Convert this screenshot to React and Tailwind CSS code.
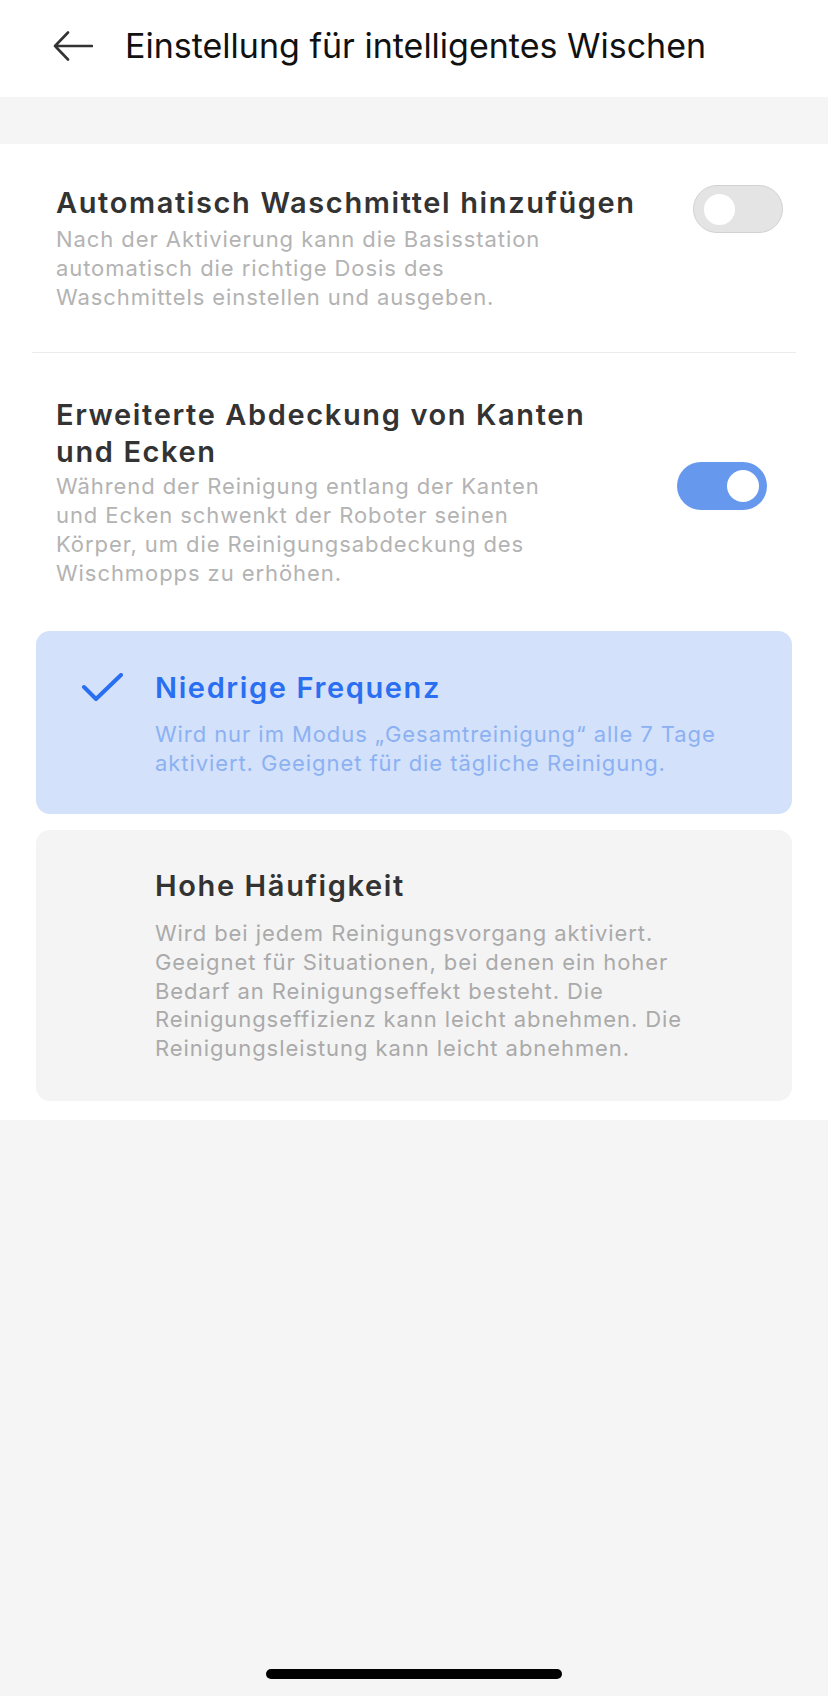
import React from "react";

const FONT = { fontFamily: "Inter, 'Noto Sans', sans-serif" };

function Toggle({ on }) {
  return on ? (
    <div className="w-[90px] h-[48px] rounded-full bg-[#6699ee] flex items-center justify-end pr-[8px] shrink-0">
      <div className="w-[32px] h-[32px] rounded-full bg-white" />
    </div>
  ) : (
    <div className="w-[90px] h-[48px] rounded-full bg-[#e4e4e4] border border-[#d2d2d2] flex items-center pl-[10px] shrink-0">
      <div className="w-[31px] h-[31px] rounded-full bg-white" />
    </div>
  );
}

function Check() {
  return (
    <svg width="44" height="30" viewBox="0 0 44 30" fill="none" className="shrink-0">
      <path d="M3 14 L15 26 L40 2" stroke="#2a6ef2" strokeWidth="4" strokeLinecap="round" strokeLinejoin="round" />
    </svg>
  );
}

// shared text styles
const TITLE = "text-[29px] font-semibold tracking-[0.056em] whitespace-nowrap";
const DESC = "text-[22px] tracking-[0.042em] whitespace-nowrap";

export default function App() {
  return (
    <div className="min-h-[1696px] w-[828px] flex flex-col bg-[#f5f5f5]" style={FONT}>
      {/* header */}
      <div className="h-[97px] bg-white pt-[26px]">
        <div className="flex items-center h-[40px]">
          <svg width="40" height="30" viewBox="0 0 40 30" fill="none" className="ml-[53px]">
            <path d="M2 15 H39 M15 1.5 L2 15 L15 28.5" stroke="#333" strokeWidth="2.6" strokeLinecap="round" strokeLinejoin="round" />
          </svg>
          <h1 className="ml-[32px] text-[34px] leading-[40px] text-[#111] font-normal whitespace-nowrap">
            Einstellung für intelligentes Wischen
          </h1>
        </div>
      </div>

      <div className="h-[47px]" />

      <div className="bg-white pb-[19px]">
        {/* row 1 */}
        <div className="flex items-start pt-[41px] pl-[56px]">
          <div className="flex-1">
            <p className={`${TITLE} leading-[36px] text-[#333]`}>Automatisch Waschmittel hinzufügen</p>
            <p className={`${DESC} mt-[4px] leading-[29px] text-[#b3b3b3]`}>
              Nach der Aktivierung kann die Basisstation<br />
              automatisch die richtige Dosis des<br />
              Waschmittels einstellen und ausgeben.
            </p>
          </div>
          <div className="mr-[45px] ml-[10px]">
            <Toggle on={false} />
          </div>
        </div>

        <div className="mx-[32px] mt-[40px] h-px bg-[#ebebeb]" />

        {/* row 2 */}
        <div className="flex items-start pt-[43px] pl-[56px]">
          <div className="flex-1">
            <p className={`${TITLE} leading-[37px] text-[#333]`}>
              Erweiterte Abdeckung von Kanten<br />und Ecken
            </p>
            <p className={`${DESC} mt-[2px] leading-[29px] text-[#b3b3b3]`}>
              Während der Reinigung entlang der Kanten<br />
              und Ecken schwenkt der Roboter seinen<br />
              Körper, um die Reinigungsabdeckung des<br />
              Wischmopps zu erhöhen.
            </p>
          </div>
          <div className="mt-[66px] mr-[61px] ml-[10px]">
            <Toggle on />
          </div>
        </div>

        {/* options */}
        <div className="mx-[36px] mt-[43px] flex flex-col gap-[16px]">
          <div className="rounded-[14px] bg-[#d3e1fa] pt-[39px] pb-[36px] flex">
            <div className="w-[119px] flex justify-end pr-[30px] pt-[3px]">
              <Check />
            </div>
            <div className="flex-1">
              <p className={`${TITLE} leading-[36px] text-[#2a6ef2]`}>Niedrige Frequenz</p>
              <p className={`${DESC} mt-[14px] leading-[29px] text-[#8cb1f3]`}>
                Wird nur im Modus „Gesamtreinigung“ alle 7 Tage<br />
                aktiviert. Geeignet für die tägliche Reinigung.
              </p>
            </div>
          </div>

          <div className="rounded-[14px] bg-[#f4f4f4] pt-[38px] pb-[38px] flex">
            <div className="w-[119px]" />
            <div className="flex-1">
              <p className={`${TITLE} leading-[36px] text-[#333]`}>Hohe Häufigkeit</p>
              <p className={`${DESC} mt-[15px] leading-[28.75px] text-[#aaaaaa]`}>
                Wird bei jedem Reinigungsvorgang aktiviert.<br />
                Geeignet für Situationen, bei denen ein hoher<br />
                Bedarf an Reinigungseffekt besteht. Die<br />
                Reinigungseffizienz kann leicht abnehmen. Die<br />
                Reinigungsleistung kann leicht abnehmen.
              </p>
            </div>
          </div>
        </div>
      </div>

      <div className="flex-1 flex items-end justify-center pb-[17px]">
        <div className="w-[296px] h-[10px] rounded-full bg-black" />
      </div>
    </div>
  );
}
